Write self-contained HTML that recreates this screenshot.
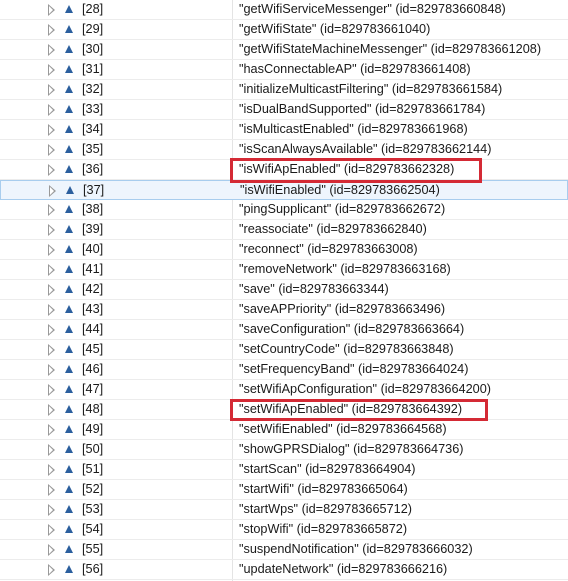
<!DOCTYPE html><html><head><style>
body{margin:0;width:568px;height:581px;background:#fff;overflow:hidden;font-family:"Liberation Sans","Noto Sans CJK SC",sans-serif;font-size:12.7px;color:#1a1a1a;position:relative}
.r{position:absolute;left:0;width:568px;height:19px;border-bottom:1px solid #ececec}
.r.sel{background:#eef5fd;border:1px solid #a8cdee;box-sizing:border-box;height:20px}
.ao{position:absolute;left:48px;top:4px;width:0;height:0;border-left:7px solid #999;border-top:6px solid transparent;border-bottom:6px solid transparent}
.ai{position:absolute;left:49px;top:6px;width:0;height:0;border-left:4px solid #fff;border-top:4px solid transparent;border-bottom:4px solid transparent}
.t{position:absolute;left:65px;top:5px;width:0;height:0;border-left:4px solid transparent;border-right:4px solid transparent;border-bottom:8px solid #2b5f9e}
.n{position:absolute;left:82px;top:2px}
.v{position:absolute;left:239px;top:2px}
.d{position:absolute;left:232px;top:0;width:1px;height:581px;background:#e4e4e4}
.box{position:absolute;border:3px solid #d42a35;box-sizing:border-box}
</style></head><body>
<div class="d"></div>
<div id="c"></div>
<div class="box" style="left:230px;top:158px;width:252px;height:25px"></div>
<div class="box" style="left:230px;top:399px;width:258px;height:22px"></div>
<script>
var v=["getWifiServiceMessenger\" (id=829783660848)","getWifiState\" (id=829783661040)","getWifiStateMachineMessenger\" (id=829783661208)","hasConnectableAP\" (id=829783661408)","initializeMulticastFiltering\" (id=829783661584)","isDualBandSupported\" (id=829783661784)","isMulticastEnabled\" (id=829783661968)","isScanAlwaysAvailable\" (id=829783662144)","isWifiApEnabled\" (id=829783662328)","isWifiEnabled\" (id=829783662504)","pingSupplicant\" (id=829783662672)","reassociate\" (id=829783662840)","reconnect\" (id=829783663008)","removeNetwork\" (id=829783663168)","save\" (id=829783663344)","saveAPPriority\" (id=829783663496)","saveConfiguration\" (id=829783663664)","setCountryCode\" (id=829783663848)","setFrequencyBand\" (id=829783664024)","setWifiApConfiguration\" (id=829783664200)","setWifiApEnabled\" (id=829783664392)","setWifiEnabled\" (id=829783664568)","showGPRSDialog\" (id=829783664736)","startScan\" (id=829783664904)","startWifi\" (id=829783665064)","startWps\" (id=829783665712)","stopWifi\" (id=829783665872)","suspendNotification\" (id=829783666032)","updateNetwork\" (id=829783666216)"];
var h="";for(var i=0;i<v.length;i++){h+='<div class="r'+(i==9?' sel':'')+'" style="top:'+(i*20)+'px"><div class="ao"></div><div class="ai"></div><div class="t"></div><div class="n">['+(28+i)+']</div><div class="v">"'+v[i]+'</div></div>';}
document.getElementById("c").innerHTML=h;
</script>
</body></html>
